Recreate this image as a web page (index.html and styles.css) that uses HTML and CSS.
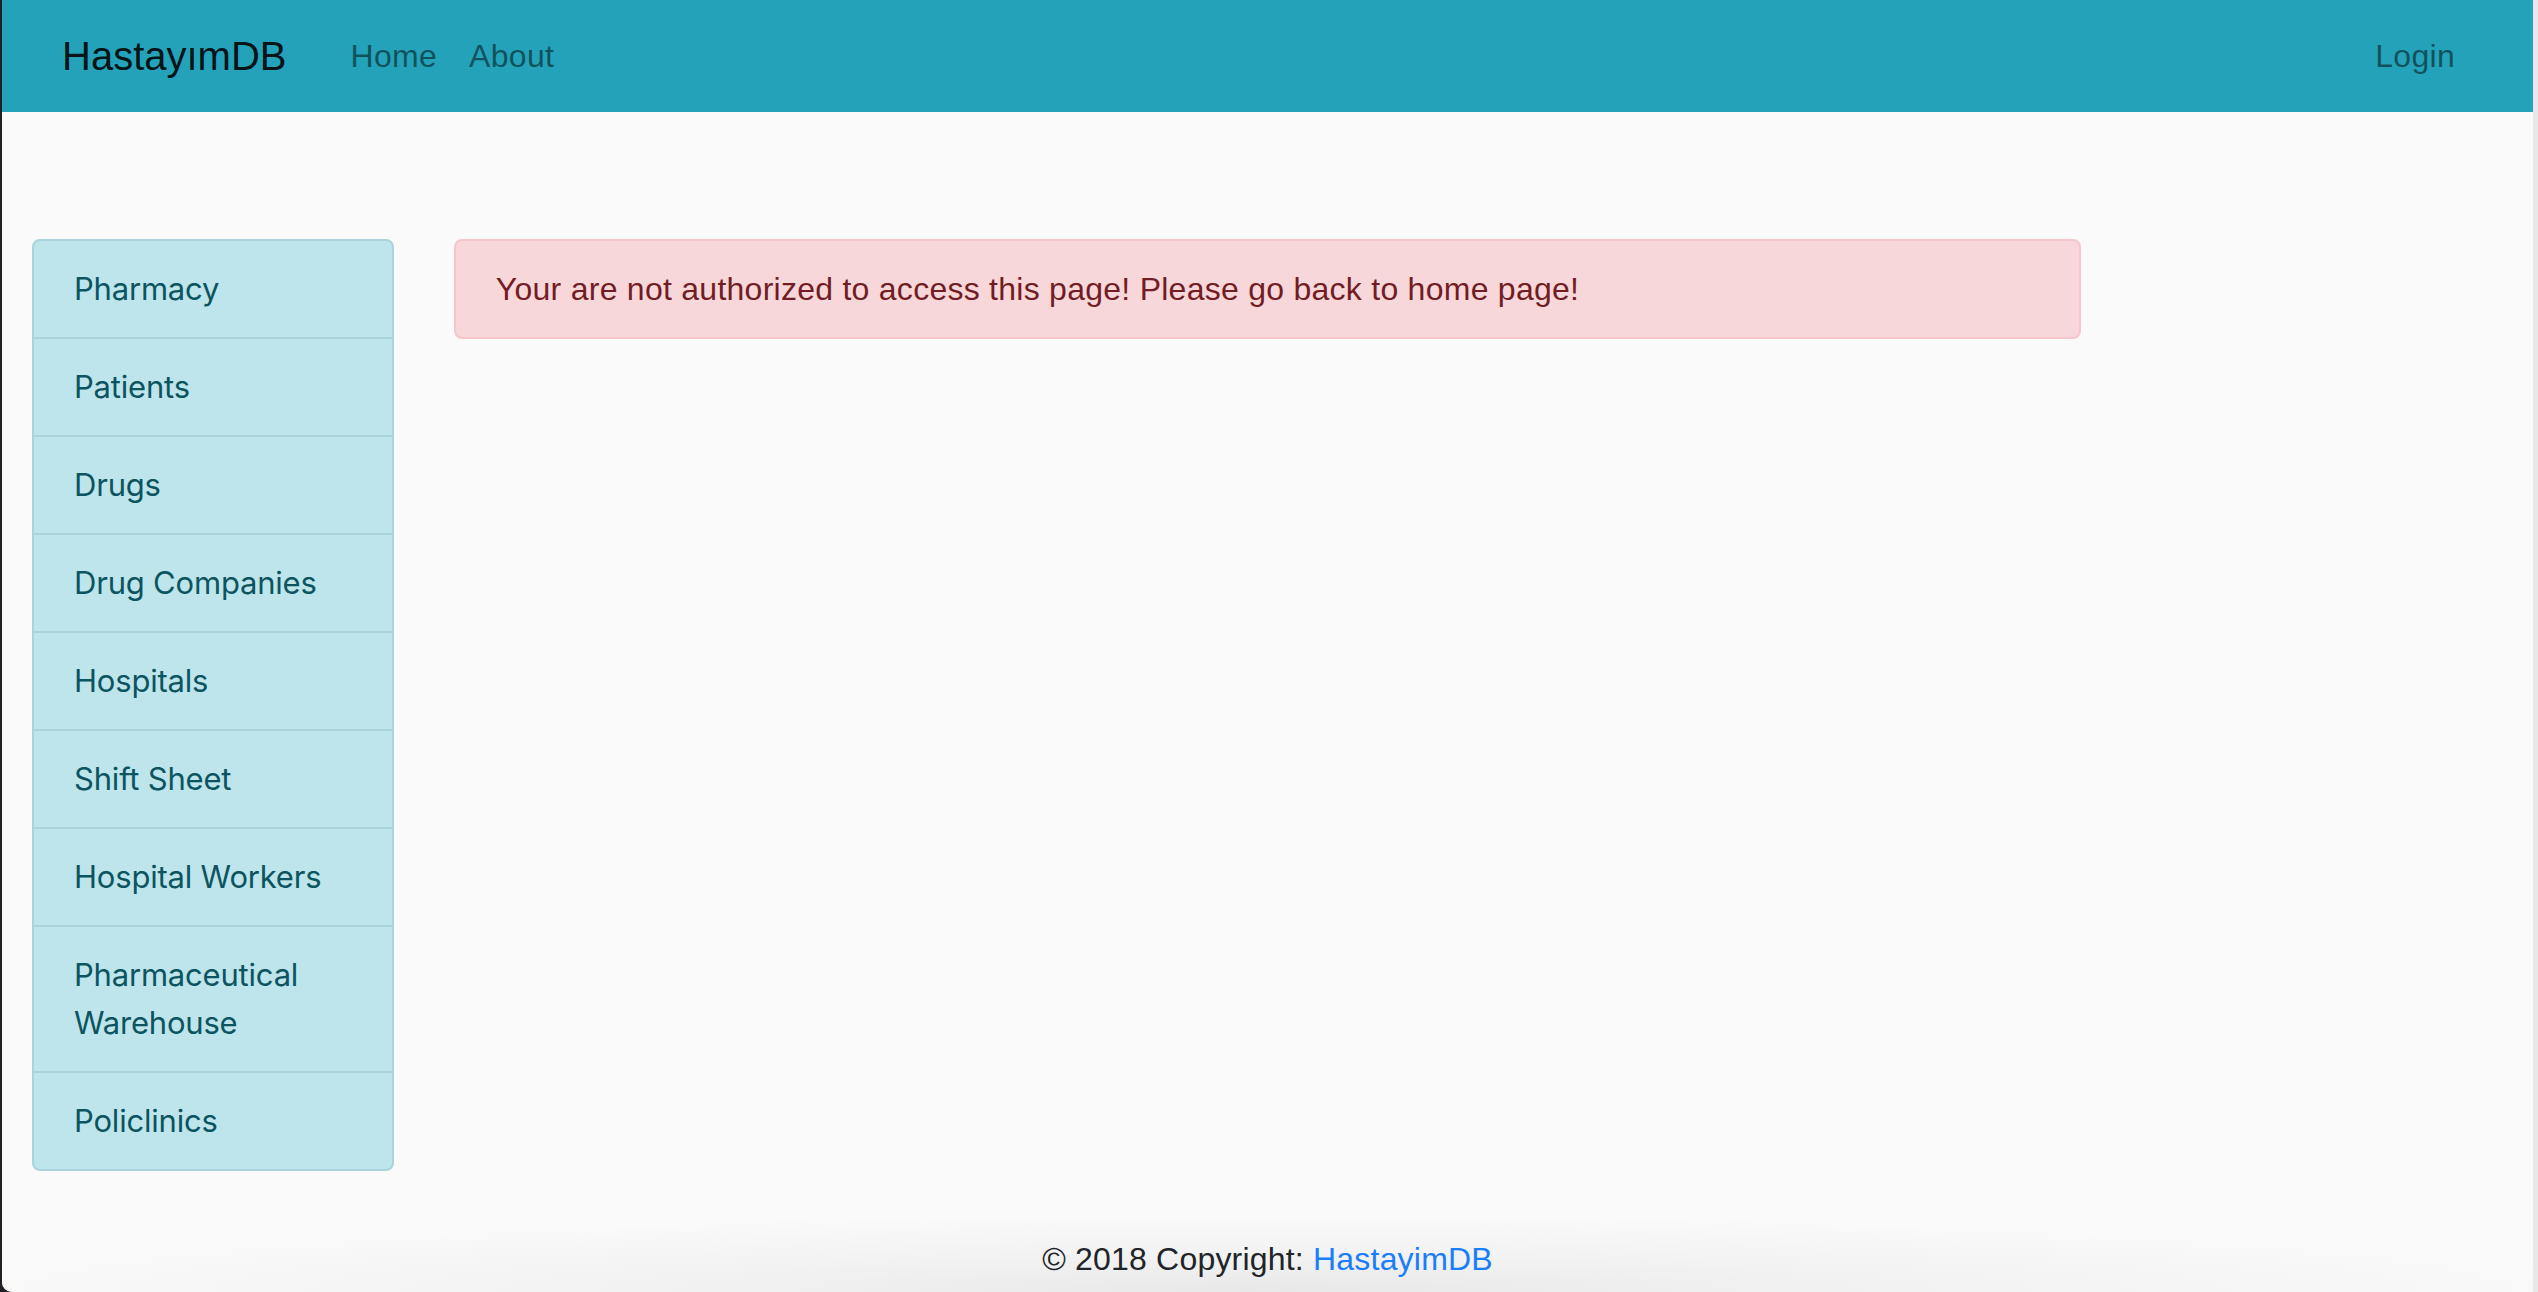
FILE: index.html
```html
<!DOCTYPE html>
<html lang="en">
<head>
<meta charset="utf-8">
<title>HastayımDB</title>
<link rel="stylesheet" href="styles.css">
</head>
<body>
<div class="window">
  <nav class="navbar">
    <a class="brand" href="#">HastayımDB</a>
    <ul class="nav">
      <li><a class="nav-link" href="#">Home</a></li>
      <li><a class="nav-link" href="#">About</a></li>
    </ul>
    <ul class="nav nav-right">
      <li><a class="nav-link" href="#">Login</a></li>
    </ul>
  </nav>
  <main class="main">
    <div class="row">
      <div class="col col-side">
        <div class="list-group">
          <a class="list-item" href="#">Pharmacy</a>
          <a class="list-item" href="#">Patients</a>
          <a class="list-item" href="#">Drugs</a>
          <a class="list-item" href="#">Drug Companies</a>
          <a class="list-item" href="#">Hospitals</a>
          <a class="list-item" href="#">Shift Sheet</a>
          <a class="list-item" href="#">Hospital Workers</a>
          <a class="list-item" href="#">Pharmaceutical Warehouse</a>
          <a class="list-item" href="#">Policlinics</a>
        </div>
      </div>
      <div class="col col-content">
        <div class="alert">Your are not authorized to access this page! Please go back to home page!</div>
      </div>
      <div class="col col-side"></div>
    </div>
  </main>
  <footer class="footer">© 2018 Copyright: <a class="footer-link" href="#">HastayimDB</a></footer>
</div>
</body>
</html>
```

FILE: styles.css
```css
* { box-sizing: border-box; }
html, body { margin: 0; padding: 0; height: 100%; }
body {
  background: #202127;
  padding-left: 2px;
  display: flex;
  font-family: "Liberation Sans", Arial, sans-serif;
  font-size: 32px;
  line-height: 48px;
  color: #212529;
}
a { text-decoration: none; }
.window {
  flex: 1;
  height: 1292px;
  background: #fafafa;
  border-right: 5px solid #e8e8e8;
  border-bottom-left-radius: 10px;
  overflow: hidden;
  display: flex;
  flex-direction: column;
}
.navbar {
  height: 112px;
  flex: 0 0 112px;
  background: #23a2b9;
  display: flex;
  align-items: center;
  padding: 0 62px 0 60px;
}
.brand {
  font-size: 40px;
  line-height: 56px;
  color: rgba(0, 0, 0, 0.9);
  margin-right: 48px;
}
.nav {
  list-style: none;
  margin: 0;
  padding: 0;
  display: flex;
}
.nav-right { margin-left: auto; }
.nav-link {
  display: block;
  padding: 0 16px;
  color: rgba(0, 0, 0, 0.5);
  letter-spacing: 0.3px;
}
.main {
  flex: 1;
  padding-top: 127px;
}
.row { display: flex; }
.col { padding: 0 30px; }
.col-side { flex: 0 0 16.6667%; max-width: 16.6667%; }
.col-content { flex: 0 0 66.6667%; max-width: 66.6667%; }
.list-group {
  display: flex;
  flex-direction: column;
  border: 2px solid #a9d4db;
  border-radius: 8px;
  background: #bee5eb;
  overflow: hidden;
}
.list-item {
  display: block;
  padding: 24px 40px 24px 40px;
  color: #0c5460;
  font-family: "Inter", "Liberation Sans", sans-serif;
  font-size: 31px;
  letter-spacing: -0.2px;
  border-top: 2px solid #a9d4db;
  margin-left: -2px;
  padding-left: 42px;
}
.list-item:first-child { border-top: 0; }
.alert {
  background: #f8d7da;
  border: 2px solid #f5c6cb;
  border-radius: 8px;
  color: #721c24;
  padding: 24px 40px;
  letter-spacing: 0.26px;
}
.footer {
  flex: 0 0 80px;
  text-align: center;
  padding-top: 23px;
  letter-spacing: 0.2px;
  background: radial-gradient(ellipse 55% 100% at 50% 100%, #e8e8e8 0%, #f2f2f2 45%, #fafafa 100%);
}
.footer-link { color: #1a7efb; }
```
